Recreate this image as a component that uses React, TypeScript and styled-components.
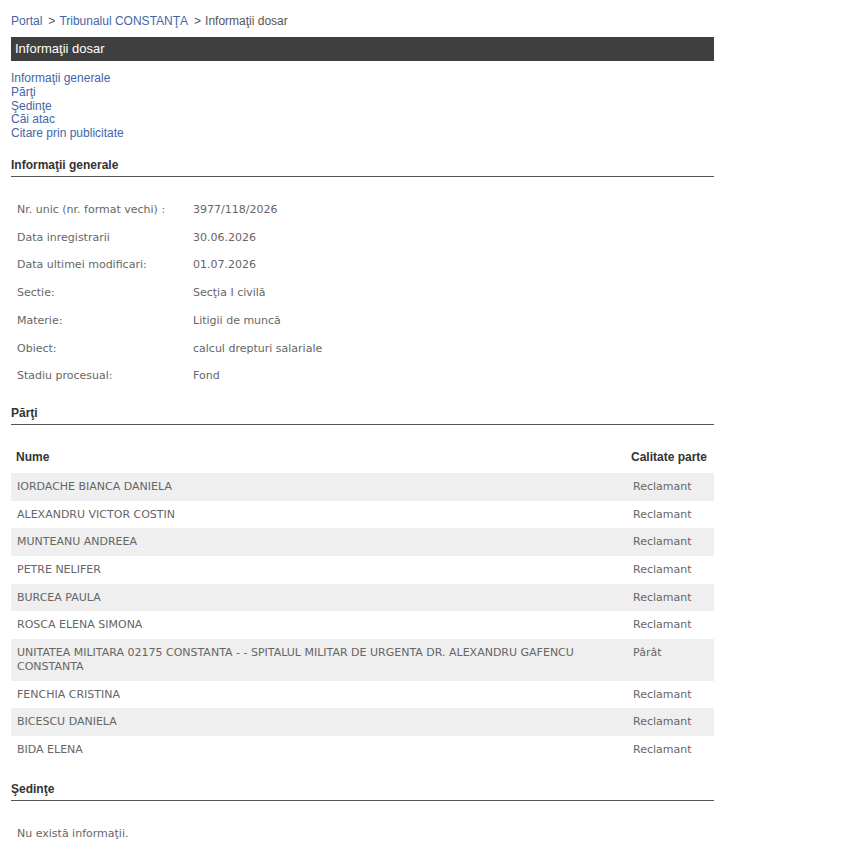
import React from "react";
import styled, { createGlobalStyle } from "styled-components";

const Global = createGlobalStyle`
  html, body { margin: 0; padding: 0; background: #fff; }
  body { font-family: "Liberation Sans", Arial, sans-serif; font-size: 12px; color: #333; }
`;

const Page = styled.div`
  width: 703px;
  padding: 13px 11px 20px 11px;
`;

const Crumbs = styled.div`
  font-size: 12px;
  line-height: 16px;
  color: #555;
  margin-bottom: 8px;
  a { color: #4466a8; text-decoration: none; }
`;

const Sep = styled.span`
  margin: 0 4px 0 6px;
`;

const TitleBar = styled.div`
  background: #3f3f3f;
  color: #fff;
  font-size: 13px;
  height: 24px;
  line-height: 24px;
  padding-left: 4px;
`;

const Nav = styled.ul`
  list-style: none;
  margin: 11px 0 0 0;
  padding: 0;
  li { line-height: 13.8px; }
  a { color: #4466a8; text-decoration: none; font-size: 12px; }
`;

const SectionTitle = styled.h3<{ $top: number }>`
  margin: ${(p) => p.$top}px 0 0 0;
  font-size: 12px;
  font-weight: bold;
  color: #333;
  line-height: 16px;
  padding-bottom: 3px;
  border-bottom: 1px solid #555;
`;

const Grid = styled.table<{ $top: number }>`
  width: 100%;
  border-collapse: collapse;
  margin-top: ${(p) => p.$top}px;
  font-family: "DejaVu Sans", Verdana, sans-serif;
  font-size: 11px;
  color: #666;
`;

const InfoLabel = styled.td`
  width: 164px;
  padding: 7px 6px;
  line-height: 13.7px;
  vertical-align: top;
`;

const InfoValue = styled.td`
  padding: 7px 6px;
  line-height: 13.7px;
  vertical-align: top;
`;

const Head = styled.th<{ $w?: number }>`
  text-align: left;
  font-family: "Liberation Sans", Arial, sans-serif;
  font-size: 12px;
  font-weight: bold;
  color: #333;
  padding: 8px 5px 9px 5px;
  line-height: 14px;
  ${(p) => (p.$w ? `width: ${p.$w}px;` : "")}
`;

const Row = styled.tr<{ $shade: boolean }>`
  background: ${(p) => (p.$shade ? "#efefef" : "transparent")};
`;

const Cell = styled.td<{ $pl?: number }>`
  padding: 7px 6px 7px ${(p) => p.$pl ?? 6}px;
  line-height: 13.7px;
  vertical-align: top;
`;

const Empty = styled.p`
  margin: 26px 0 0 6px;
  font-family: "DejaVu Sans", Verdana, sans-serif;
  font-size: 11px;
  color: #666;
`;

const info: [string, string][] = [
  ["Nr. unic (nr. format vechi) :", "3977/118/2026"],
  ["Data inregistrarii", "30.06.2026"],
  ["Data ultimei modificari:", "01.07.2026"],
  ["Sectie:", "Secţia I civilă"],
  ["Materie:", "Litigii de muncă"],
  ["Obiect:", "calcul drepturi salariale"],
  ["Stadiu procesual:", "Fond"],
];

const parties: [string, string][] = [
  ["IORDACHE BIANCA DANIELA", "Reclamant"],
  ["ALEXANDRU VICTOR COSTIN", "Reclamant"],
  ["MUNTEANU ANDREEA", "Reclamant"],
  ["PETRE NELIFER", "Reclamant"],
  ["BURCEA PAULA", "Reclamant"],
  ["ROSCA ELENA SIMONA", "Reclamant"],
  [
    "UNITATEA MILITARA 02175 CONSTANTA - - SPITALUL MILITAR DE URGENTA DR. ALEXANDRU GAFENCU CONSTANTA",
    "Pârât",
  ],
  ["FENCHIA CRISTINA", "Reclamant"],
  ["BICESCU DANIELA", "Reclamant"],
  ["BIDA ELENA", "Reclamant"],
];

export default function App() {
  return (
    <>
      <Global />
      <Page>
        <Crumbs>
          <a href="#">Portal</a>
          <Sep>&gt;</Sep>
          <a href="#">Tribunalul CONSTANŢA</a>
          <Sep>&gt;</Sep>
          Informaţii dosar
        </Crumbs>
        <TitleBar>Informaţii dosar</TitleBar>
        <Nav>
          <li><a href="#">Informaţii generale</a></li>
          <li><a href="#">Părţi</a></li>
          <li><a href="#">Şedinţe</a></li>
          <li><a href="#">Căi atac</a></li>
          <li><a href="#">Citare prin publicitate</a></li>
        </Nav>

        <SectionTitle $top={16}>Informaţii generale</SectionTitle>
        <Grid $top={19}>
          <tbody>
            {info.map(([k, v]) => (
              <tr key={k}>
                <InfoLabel>{k}</InfoLabel>
                <InfoValue>{v}</InfoValue>
              </tr>
            ))}
          </tbody>
        </Grid>

        <SectionTitle $top={15}>Părţi</SectionTitle>
        <Grid $top={17}>
          <thead>
            <tr>
              <Head>Nume</Head>
              <Head $w={78}>Calitate parte</Head>
            </tr>
          </thead>
          <tbody>
            {parties.map(([n, c], i) => (
              <Row key={n} $shade={i % 2 === 0}>
                <Cell>{n}</Cell>
                <Cell $pl={7}>{c}</Cell>
              </Row>
            ))}
          </tbody>
        </Grid>

        <SectionTitle $top={17}>Şedinţe</SectionTitle>
        <Empty>Nu există informaţii.</Empty>
      </Page>
    </>
  );
}
